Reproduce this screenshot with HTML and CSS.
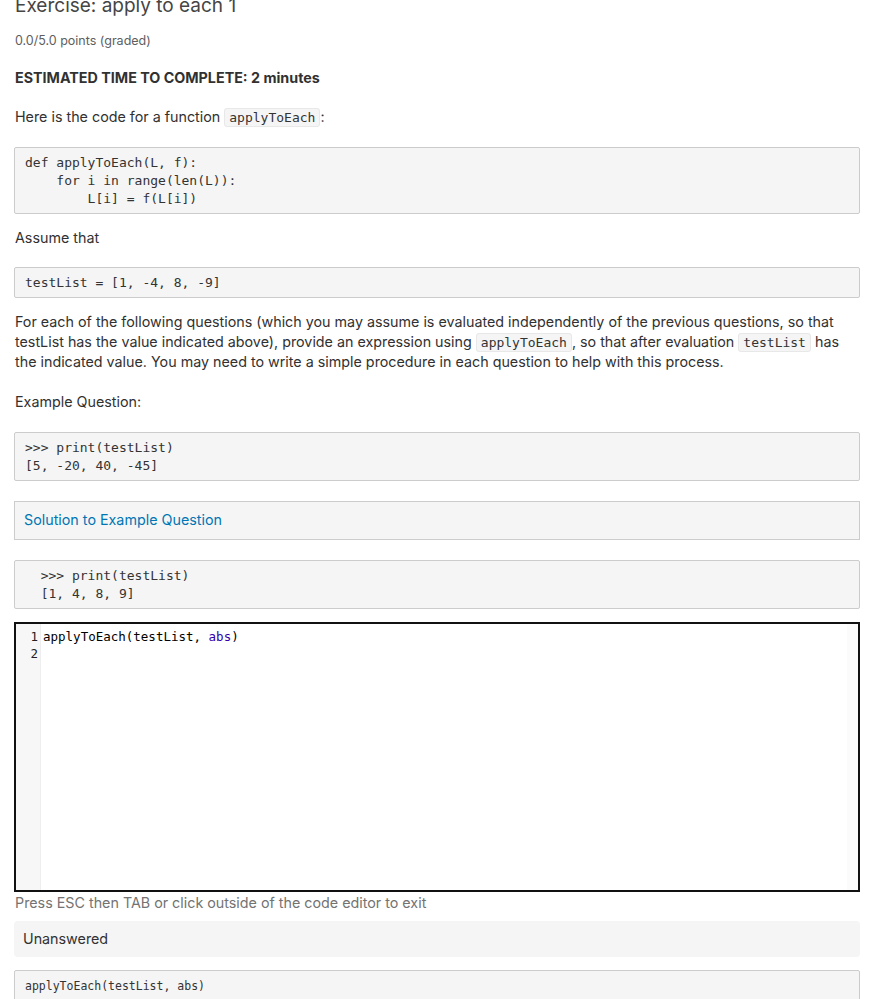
FILE: index.html
```html
<!DOCTYPE html>
<html lang="en">
<head>
<meta charset="utf-8">
<title>Exercise: apply to each 1</title>
<link rel="stylesheet" href="styles.css">
</head>
<body>
<div class="problem">
  <h3 class="title">Exercise: apply to each 1</h3>
  <div class="points">0.0/5.0 points (graded)</div>
  <p class="estimate"><strong>ESTIMATED TIME TO COMPLETE: 2 minutes</strong></p>
  <p class="gap20">Here is the code for a function <code>applyToEach</code>:</p>
<pre class="block">def applyToEach(L, f):
    for i in range(len(L)):
        L[i] = f(L[i])</pre>
  <p>Assume that</p>
<pre class="block">testList = [1, -4, 8, -9]</pre>
  <p class="gap20">For each of the following questions (which you may assume is evaluated independently of the previous questions, so that testList has the value indicated above), provide an expression using <code>applyToEach</code>, so that after evaluation <code>testList</code> has the indicated value. You may need to write a simple procedure in each question to help with this process.</p>
  <p class="gap20">Example Question:</p>
<pre class="block">&gt;&gt;&gt; print(testList)
[5, -20, 40, -45]</pre>
  <div class="solution">Solution to Example Question</div>
<pre class="block block-after">  &gt;&gt;&gt; print(testList)
  [1, 4, 8, 9]</pre>
  <div class="editor">
    <div class="gutter"><div>1</div><div>2</div></div>
    <div class="lines"><div>applyToEach(testList, <span class="builtin">abs</span>)</div><div>&nbsp;</div></div>
    <div class="scroll"></div>
  </div>
  <div class="hint">Press ESC then TAB or click outside of the code editor to exit</div>
  <div class="status">Unanswered</div>
<pre class="block answer">applyToEach(testList, abs)</pre>
</div>
</body>
</html>
```
FILE: styles.css
```css
html, body {
  margin: 0;
  padding: 0;
  background: #fff;
}
body {
  font-family: "Inter", "Noto Sans", sans-serif;
  font-size: 14.3px;
  line-height: 20px;
  color: #313131;
}
.problem {
  width: 846px;
  padding-left: 14px;
}
.title {
  margin: -6px 0 0 0;
  padding-left: 1px;
  font-size: 19px;
  line-height: 24px;
  font-weight: 400;
  color: #454545;
}
.points {
  margin-top: 13px;
  padding-left: 1px;
  font-size: 12.5px;
  color: #5e5e5e;
}
p {
  margin: 0 0 19px 0;
  padding-left: 1px;
}
p.gap20 {
  margin-bottom: 20px;
}
.estimate {
  margin-top: 17px;
}
code {
  font-family: "DejaVu Sans Mono", monospace;
  font-size: 13px;
  line-height: 1;
  background: #f5f5f5;
  border: 1px solid #e8e8e8;
  border-radius: 3px;
  padding: 1px 4px;
  color: #333;
}
.block {
  margin: 0 0 14px 0;
  padding: 6px 10px 5px;
  background: #f5f5f5;
  border: 1px solid #cccccc;
  border-radius: 2px;
  font-family: "DejaVu Sans Mono", monospace;
  font-size: 13px;
  line-height: 18px;
  color: #333;
  white-space: pre;
}
.solution {
  margin: 20px 0 20px 0;
  padding: 8px 9px 9px;
  background: #f5f5f5;
  border: 1px solid #cccccc;
  color: #0075b4;
}
.block-after {
  margin-bottom: 13px;
}
.editor {
  display: flex;
  height: 266px;
  border: 2px solid #111;
  background: #fff;
  font-family: "DejaVu Sans Mono", monospace;
  font-size: 12.5px;
  line-height: 17px;
  color: #000;
}
.gutter {
  width: 25px;
  background: #f7f7f7;
  border-right: 1px solid #eee;
  padding-top: 4px;
  padding-right: 2px;
  text-align: right;
  color: #222;
  box-sizing: border-box;
}
.lines {
  flex: 1;
  padding: 4px 0 0 2px;
  white-space: pre;
}
.builtin {
  color: #30a;
}
.scroll {
  width: 11px;
  background: #fbfbfb;
}
.hint {
  padding-left: 1px;
  color: #737373;
  margin-top: 1px;
}
.status {
  margin: 8px 0 13px 0;
  padding: 8px 9px;
  background: #f5f5f5;
  border-radius: 4px;
  color: #313131;
}
.answer {
  font-size: 11.5px;
  padding-top: 6px;
  padding-bottom: 20px;
}
```
